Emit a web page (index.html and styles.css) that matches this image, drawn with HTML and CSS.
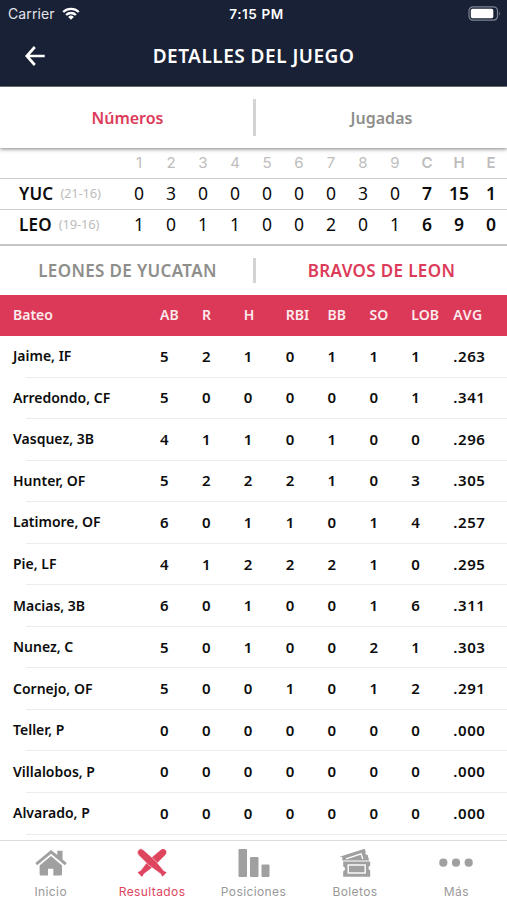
FILE: index.html
```html
<!DOCTYPE html>
<html lang="es">
<head>
  <meta charset="UTF-8">
  <title>Detalles del juego</title>
  <link rel="stylesheet" href="styles.css">
</head>
<body>
  <div class="app">
    <header class="header">
      <div class="status-bar">
        <div class="carrier">
          <span>Carrier</span>
          <svg width="18" height="13" viewBox="0 0 18 13" fill="none" stroke="#fff" stroke-width="2.3">
            <path d="M1.2 5a11.2 11.2 0 0 1 15.6 0M4.1 8a7 7 0 0 1 9.8 0"/>
            <path d="M9 12.7L6.2 9.9a4 4 0 0 1 5.6 0z" fill="#fff" stroke="none"/>
          </svg>
        </div>
        <span class="clock">7:15 PM</span>
        <svg class="battery" width="33" height="15" viewBox="0 0 33 15">
          <rect x="1" y=".8" width="28.5" height="13.4" rx="4" fill="none" stroke="#7d8494" stroke-width="1.2"/>
          <rect x="2.8" y="2.7" width="22.5" height="9.6" rx="1.8" fill="#fff"/>
          <path d="M31 5.2q1.6 2.3 0 4.6z" fill="#7d8494"/>
        </svg>
      </div>
      <div class="title-bar">
        <svg class="back" width="22" height="22" viewBox="0 0 22 22" fill="none" stroke="#fff" stroke-width="2.7">
          <path d="M10.8 2L2.8 11l8 9M2.8 11H20.7"/>
        </svg>
        <h1>DETALLES DEL JUEGO</h1>
      </div>
    </header>

    <!-- Pestañas -->
    <nav class="tabs">
      <a class="active"><span>Números</span></a>
      <a><span>Jugadas</span></a>
    </nav>

    <!-- Marcador por entradas -->
    <section class="score">
      <div class="score-row score-head"><span></span><span>1</span><span>2</span><span>3</span><span>4</span><span>5</span><span>6</span><span>7</span><span>8</span><span>9</span><b>C</b><b>H</b><b>E</b></div>
      <div class="score-row"><span class="team"><b>YUC</b><small>(21-16)</small></span><span>0</span><span>3</span><span>0</span><span>0</span><span>0</span><span>0</span><span>0</span><span>3</span><span>0</span><b>7</b><b>15</b><b>1</b></div>
      <div class="score-row"><span class="team"><b>LEO</b><small>(19-16)</small></span><span>1</span><span>0</span><span>1</span><span>1</span><span>0</span><span>0</span><span>2</span><span>0</span><span>1</span><b>6</b><b>9</b><b>0</b></div>
    </section>

    <nav class="tabs team-tabs">
      <a><span>LEONES DE YUCATAN</span></a>
      <a class="active"><span>BRAVOS DE LEON</span></a>
    </nav>

    <!-- Bateo -->
    <section class="batting">
      <div class="bat-row bat-head"><span>Bateo</span><span>AB</span><span>R</span><span>H</span><span>RBI</span><span>BB</span><span>SO</span><span>LOB</span><span>AVG</span></div>
      <div class="bat-row"><span>Jaime, IF</span><span>5</span><span>2</span><span>1</span><span>0</span><span>1</span><span>1</span><span>1</span><span>.263</span></div>
      <div class="bat-row"><span>Arredondo, CF</span><span>5</span><span>0</span><span>0</span><span>0</span><span>0</span><span>0</span><span>1</span><span>.341</span></div>
      <div class="bat-row"><span>Vasquez, 3B</span><span>4</span><span>1</span><span>1</span><span>0</span><span>1</span><span>0</span><span>0</span><span>.296</span></div>
      <div class="bat-row"><span>Hunter, OF</span><span>5</span><span>2</span><span>2</span><span>2</span><span>1</span><span>0</span><span>3</span><span>.305</span></div>
      <div class="bat-row"><span>Latimore, OF</span><span>6</span><span>0</span><span>1</span><span>1</span><span>0</span><span>1</span><span>4</span><span>.257</span></div>
      <div class="bat-row"><span>Pie, LF</span><span>4</span><span>1</span><span>2</span><span>2</span><span>2</span><span>1</span><span>0</span><span>.295</span></div>
      <div class="bat-row"><span>Macias, 3B</span><span>6</span><span>0</span><span>1</span><span>0</span><span>0</span><span>1</span><span>6</span><span>.311</span></div>
      <div class="bat-row"><span>Nunez, C</span><span>5</span><span>0</span><span>1</span><span>0</span><span>0</span><span>2</span><span>1</span><span>.303</span></div>
      <div class="bat-row"><span>Cornejo, OF</span><span>5</span><span>0</span><span>0</span><span>1</span><span>0</span><span>1</span><span>2</span><span>.291</span></div>
      <div class="bat-row"><span>Teller, P</span><span>0</span><span>0</span><span>0</span><span>0</span><span>0</span><span>0</span><span>0</span><span>.000</span></div>
      <div class="bat-row"><span>Villalobos, P</span><span>0</span><span>0</span><span>0</span><span>0</span><span>0</span><span>0</span><span>0</span><span>.000</span></div>
      <div class="bat-row"><span>Alvarado, P</span><span>0</span><span>0</span><span>0</span><span>0</span><span>0</span><span>0</span><span>0</span><span>.000</span></div>
    </section>

    <!-- Menú inferior -->
    <nav class="bottom-nav">
      <a>
        <svg width="34" height="30" viewBox="0 0 34 30" fill="#a0a0a0">
          <path d="M17 2L1.3 15l1.8 2.2L17 5.8l13.9 11.4 1.8-2.2-4.2-3.6V2.8h-5.2v4.3z"/>
          <path d="M17 8L5.6 17.4V26q0 1.5 1.5 1.5H14v-6.8h5.3v6.8h7.2q1.5 0 1.5-1.5v-8.6z"/>
        </svg>
        <span>Inicio</span>
      </a>
      <a class="active">
        <svg width="32" height="30" viewBox="0 0 32 30" fill="#de4660">
          <path d="M24.6 1.9q2.6-2 4.8.2 2.1 2.2 0 4.6L19 17.2 7.6 25.9q-.4 1.8-1.8 2.9L1.7 24.6q1.1-1.4 3-1.8L13.4 11.6z"/>
          <path d="M2.4 2.1q2.2-2.4 5-.2L19.4 12.6l8.4 10.2q1.8.4 3 1.8l-4.2 4.2q-1.4-1.1-1.8-2.9L12.8 17.2 2.4 6.9q-2-2.4 0-4.8z" stroke="#fff" stroke-width=".5"/>
        </svg>
        <span>Resultados</span>
      </a>
      <a>
        <svg width="34" height="30" viewBox="0 0 34 30" fill="#a0a0a0">
          <rect x="1.5" y="1" width="8.5" height="28" rx="1"/>
          <rect x="13" y="9" width="8.5" height="20" rx="1"/>
          <rect x="24.5" y="16.5" width="8" height="12.5" rx="1"/>
        </svg>
        <span>Posiciones</span>
      </a>
      <a>
        <svg width="32" height="30" viewBox="0 0 32 30" fill="#a0a0a0">
          <path d="M.6 8.7L25.6.8l1.2 3.5q-1 1.2.2 2.1.8.6 1.6.4l1.5 5.6H3.8l-.8-1.2q.9-.8.2-1.8-.8-.8-1.8-.4z"/>
          <path d="M7 10.8L22 5.8l1.8 5.2" fill="none" stroke="#fff" stroke-width="1.3"/>
          <path d="M4.2 13.6h27v4.2q-1.8.3-1.8 2.2t1.8 2.3v6.4h-27v-5.4q1.8-.5 1.8-2.5t-1.8-2.4z"/>
          <rect x="9.2" y="17" width="17" height="8" fill="none" stroke="#fff" stroke-width="1.4"/>
        </svg>
        <span>Boletos</span>
      </a>
      <a>
        <svg width="34" height="30" viewBox="0 0 34 30" fill="#a0a0a0">
          <circle cx="4.3" cy="14.7" r="4.1"/>
          <circle cx="17" cy="14.7" r="4.1"/>
          <circle cx="29.7" cy="14.7" r="4.1"/>
        </svg>
        <span>Más</span>
      </a>
    </nav>
  </div>
</body>
</html>
```
FILE: styles.css
```css
* {
  box-sizing: border-box;
}

body {
  margin: 0;
  font-family: "Noto Sans", sans-serif;
  background: white;
  color: #0c0c0c;
}

.app {
  display: flex;
  flex-direction: column;
  height: 900px;
  overflow: hidden;
}

/* Cabecera */
.header {
  height: 87px;
  flex-shrink: 0;
  background: #192136;
  border-bottom: 1px solid #727985;
  color: white;
}

.status-bar {
  display: grid;
  grid-template-columns: 1fr auto 1fr;
  align-items: center;
  height: 27px;
  padding: 0 6px 0 8px;
  font-family: Inter, sans-serif;
  font-size: 14px;
}

.carrier {
  display: flex;
  align-items: center;
  gap: 7px;
  letter-spacing: 0.1px;
  color: #e3e5ea;
}

.clock {
  padding-left: 4px;
  font-weight: 600;
  font-size: 13.5px;
  letter-spacing: 0.6px;
}

.battery {
  justify-self: end;
}

.title-bar {
  display: grid;
  grid-template-columns: 46px 1fr 46px;
  align-items: center;
  height: 58px;
}

.back {
  margin-left: 24px;
}

h1 {
  margin: 0;
  text-align: center;
  font-size: 19px;
  font-weight: 600;
  letter-spacing: 0.5px;
}

/* Pestañas */
.tabs {
  display: flex;
  align-items: center;
  height: 61px;
  flex-shrink: 0;
  padding-left: 2px;
  font-size: 16px;
  font-weight: 600;
  color: #8e8e8b;
  box-shadow: 0 1px 4px rgba(0,0,0,0.5);
}

.tabs a {
  flex: 1;
  display: flex;
  justify-content: center;
  align-items: center;
  height: 37px;
}

.tabs a + a {
  border-left: 3px solid #d3d3d3;
}

.tabs .active {
  color: #dc3b59;
}

.team-tabs {
  height: 49px;
  font-size: 17px;
  letter-spacing: 0.35px;
  box-shadow: none;
}

.team-tabs a {
  height: 25px;
}

/* Marcador */
.score {
  height: 98px;
  flex-shrink: 0;
  padding-top: 1px;
  border-bottom: 2px solid #c6c6c6;
}

.score-row {
  display: grid;
  grid-template-columns: 123px repeat(12, 32px);
  align-items: center;
  height: 31px;
  padding-bottom: 2px;
  border-bottom: 1px solid #cfcfcf;
  text-align: center;
  font-size: 17.5px;
}

.score-row:last-child {
  padding-bottom: 3px;
  border-bottom: none;
}

.score-row b {
  font-weight: 600;
}

.score-head {
  height: 30px;
  font-family: Inter, sans-serif;
  font-size: 15px;
  color: #bdbdbd;
}

.team {
  display: flex;
  align-items: center;
  gap: 7px;
  padding-left: 19px;
  font-size: 17px;
  letter-spacing: 0.2px;
}

.team small {
  font-size: 13px;
  letter-spacing: -0.2px;
  color: #bdbdbd;
}

/* Tabla de bateo */
.batting {
  flex: 1;
  min-height: 0;
}

.bat-row {
  display: grid;
  grid-template-columns: 147px repeat(7, 41.9px) 1fr;
  align-items: center;
  height: 41.55px;
  padding: 0 0 2px 13px;
  font-size: 14px;
  font-weight: 600;
  background: linear-gradient(#ececec, #ececec) 26px 100% / 100% 1px no-repeat;
}

.bat-row span + span {
  font-size: 15px;
}

.bat-row span:last-child {
  letter-spacing: 0.6px;
}

.bat-head {
  height: 41px;
  background: #dc3857;
  color: #fbeaec;
}

.bat-head span + span {
  font-size: 14px;
}

/* Menú inferior */
.bottom-nav {
  display: flex;
  height: 60px;
  flex-shrink: 0;
  padding-top: 7px;
  border-top: 1px solid #dcdcdc;
  background: white;
  font-family: Inter, sans-serif;
  font-size: 12px;
  letter-spacing: 0.4px;
  color: #999;
}

.bottom-nav a {
  flex: 1;
  display: flex;
  flex-direction: column;
  align-items: center;
  gap: 6px;
}

.bottom-nav .active {
  color: #de4660;
}
```
